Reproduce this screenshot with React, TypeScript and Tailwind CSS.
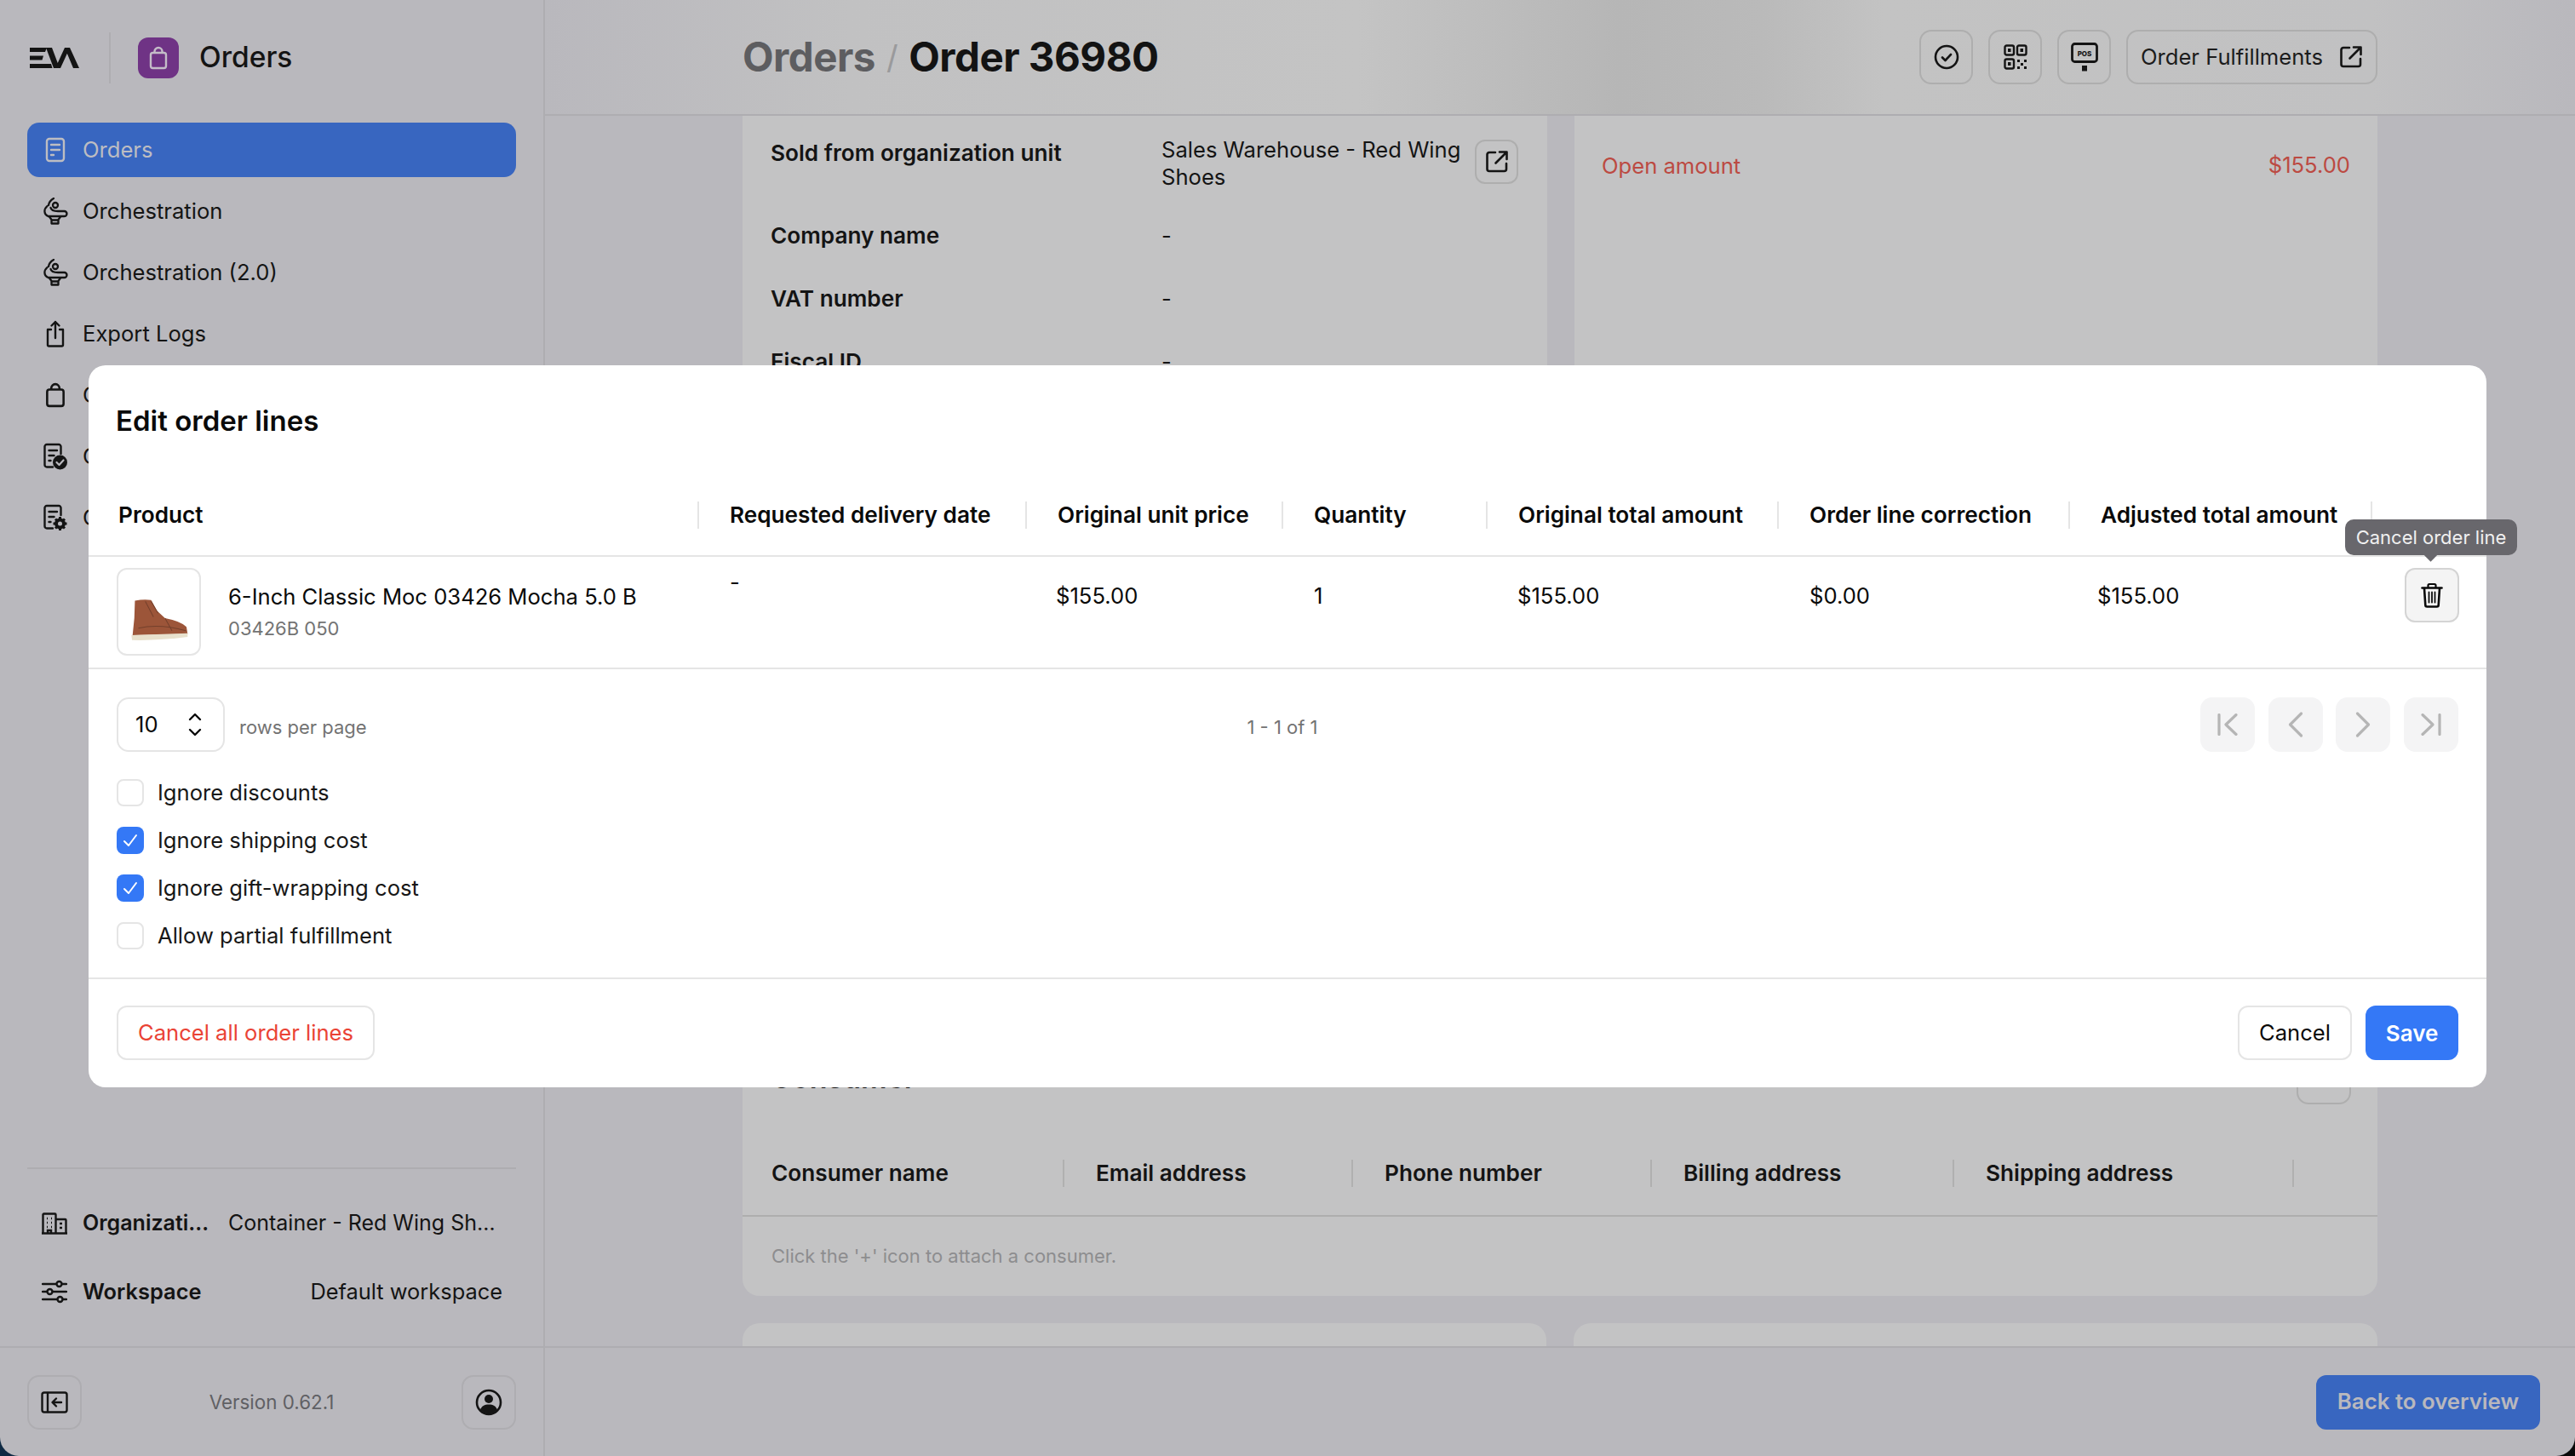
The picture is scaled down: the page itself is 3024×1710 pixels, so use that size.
import React from 'react';
import { ChevronLeft, ChevronRight } from 'lucide-react';

const Bag = ({ className }: { className?: string }) => (
  <svg viewBox="0 0 24 28" fill="none" stroke="currentColor" strokeWidth="2.4" strokeLinejoin="round" className={className}>
    <rect x="3" y="8" width="18" height="18" rx="2.5" />
    <path d="M7.5 8V6.5a4.5 4.5 0 0 1 9 0V8" />
  </svg>
);

const DocLines = ({ className }: { className?: string }) => (
  <svg viewBox="0 0 24 30" fill="none" stroke="currentColor" strokeWidth="2.4" strokeLinecap="round" strokeLinejoin="round" className={className}>
    <rect x="2" y="2" width="20" height="26" rx="3" />
    <path d="M7 9h10M7 15h10M7 21h3" />
  </svg>
);

const Orchestration = ({ className }: { className?: string }) => (
  <svg viewBox="0 0 32 32" fill="none" stroke="currentColor" strokeWidth="2.3" strokeLinecap="round" strokeLinejoin="round" className={className}>
    <path d="M14 1C10.500 3 8.500 5.500 8 9" />
    <circle cx="16" cy="9" r="3" />
    <path d="M6.500 10C2 14 2.500 20 7.500 22H26.500a3 3 0 0 0 0-6H19C14.500 16 11 14.500 10.500 12" />
    <path d="M9 22.500l2.500 3.500v4.500h8V26l2.500-3.500M11.500 26.500h8" />
  </svg>
);

const ExportIcon = ({ className }: { className?: string }) => (
  <svg viewBox="0 0 24 32" fill="none" stroke="currentColor" strokeWidth="2.4" strokeLinecap="round" strokeLinejoin="round" className={className}>
    <path d="M7 11H3v18a1.500 1.500 0 0 0 1.500 1.500h15A1.500 1.500 0 0 0 21 29V11h-4" />
    <path d="M12 21V2M7.500 6.500 12 2l4.500 4.500" />
  </svg>
);

const DocCheck = ({ gear, className }: { gear?: boolean; className?: string }) => (
  <svg viewBox="0 0 30 32" fill="none" className={className}>
    <path d="M12 28.500H5a2.500 2.500 0 0 1-2.500-2.500V4.500A2.500 2.500 0 0 1 5 2h14a2.500 2.500 0 0 1 2.500 2.500V13" stroke="currentColor" strokeWidth="2.4" strokeLinecap="round" />
    <path d="M7.500 9h9.500M7.500 15h6M7.500 21h2" stroke="currentColor" strokeWidth="2.4" strokeLinecap="round" />
    {gear ? (
      <g>
        <circle cx="20.500" cy="23" r="4.500" fill="none" stroke="currentColor" strokeWidth="4" />
        <path d="M20.500 15v3M20.500 28v3M12.500 23h3M25.500 23h3M15 17.500l2 2M24 26.500l2 2M15 28.500l2-2M24 19.500l2-2" stroke="currentColor" strokeWidth="3" />
      </g>
    ) : (
      <g>
        <circle cx="20.500" cy="23" r="8.500" fill="currentColor" />
        <path d="M16.500 23l3 3 5-5.500" stroke="#b9b8bd" strokeWidth="2.200" strokeLinecap="round" strokeLinejoin="round" />
      </g>
    )}
  </svg>
);

const ExternalIcon = ({ className }: { className?: string }) => (
  <svg viewBox="0 0 26 26" fill="none" stroke="currentColor" strokeWidth="2.600" strokeLinecap="round" strokeLinejoin="round" className={className}>
    <path d="M11 2H4a2.500 2.500 0 0 0-2.500 2.500v17A2.500 2.500 0 0 0 4 24h17.500a2.500 2.500 0 0 0 2.500-2.500V15" />
    <path d="M16 1.500h8.500V10M24 2 11.500 14.500" />
  </svg>
);

const TrashIcon = ({ className }: { className?: string }) => (
  <svg viewBox="0 0 26 30" fill="none" stroke="currentColor" strokeLinecap="round" strokeLinejoin="round" className={className}>
    <path d="M1.500 6.500h23" strokeWidth="2.600" />
    <path d="M8.500 6V3.500A1.500 1.500 0 0 1 10 2h6a1.500 1.500 0 0 1 1.500 1.500V6" strokeWidth="2.200" />
    <path d="M4 7l1.300 19.500A2 2 0 0 0 7.300 28.500h11.400a2 2 0 0 0 2-2L22 7" strokeWidth="2.600" />
    <path d="M9.500 11.500v12M13 11.500v12M16.500 11.500v12" strokeWidth="1.800" />
  </svg>
);

const EdgeChevron = ({ flip }: { flip?: boolean }) => (
  <svg viewBox="0 0 24 26" fill="none" stroke="#b5b5b5" strokeWidth="3.200" strokeLinecap="round" strokeLinejoin="round" className={`w-[24px] h-[26px] ${flip ? 'rotate-180' : ''}`}>
    <path d="M2 1.500v23M22 1.500 10 13l12 11.500" />
  </svg>
);

const Checkbox = ({ checked, label }: { checked?: boolean; label: string }) => (
  <div className="flex items-center gap-[16px] h-[32px]">
    {checked ? (
      <span className="w-[32px] h-[32px] rounded-[8px] bg-[#3478f6] flex items-center justify-center">
        <svg viewBox="0 0 18 18" fill="none" stroke="#fff" strokeWidth="2" strokeLinecap="round" strokeLinejoin="round" className="w-[18px] h-[18px]">
          <path d="M2 10l5 5 9-12" />
        </svg>
      </span>
    ) : (
      <span className="w-[32px] h-[32px] rounded-[8px] border-2 border-[#e5e5e5] bg-white" />
    )}
    <span className="text-[25.6px] pt-[1px] text-[#171717]">{label}</span>
  </div>
);

const navItems = [
  { label: 'Orders', icon: <DocLines className="w-[24px] h-[30px]" />, active: true },
  { label: 'Orchestration', icon: <Orchestration className="w-[32px] h-[32px]" /> },
  { label: 'Orchestration (2.0)', icon: <Orchestration className="w-[32px] h-[32px]" /> },
  { label: 'Export Logs', icon: <ExportIcon className="w-[24px] h-[32px]" /> },
  { label: 'Orders', icon: <Bag className="w-[26px] h-[30px]" /> },
  { label: 'Orders', icon: <DocCheck className="w-[30px] h-[32px]" /> },
  { label: 'Orders', icon: <DocCheck gear className="w-[30px] h-[32px]" /> },
];

const columns = ['Product', 'Requested delivery date', 'Original unit price', 'Quantity', 'Original total amount', 'Order line correction', 'Adjusted total amount'];
const consumerColumns = ['Consumer name', 'Email address', 'Phone number', 'Billing address', 'Shipping address'];

const Sidebar = () => (
  <aside className="w-[640px] shrink-0 border-r-2 border-[#aeadb1] flex flex-col text-[#141414]">
    <div className="h-[135px] shrink-0 flex items-center pl-[35px]">
      <svg viewBox="0 0 58 24" className="w-[58px] h-[24px] text-[#141414]" fill="currentColor">
        <path d="M0 0h20l-2 5H0zM0 9.500h16l-1.500 5H0zM0 19h25l1.500 5H0z" />
        <path d="M19 0h7l9 24h-7zM30 24 41 0h6L36 24zM41 0h6l11 24h-7z" />
      </svg>
      <div className="w-[2px] h-[60px] bg-[#aeadb1] ml-[35px]" />
      <div className="ml-[32px] w-[48px] h-[48px] rounded-[12px] bg-[#6f3385] flex items-center justify-center text-[#c4bcc8]">
        <Bag className="w-[24px] h-[28px]" />
      </div>
      <span className="ml-[24px] text-[33.5px] font-medium">Orders</span>
    </div>

    <nav className="flex flex-col gap-[8px] px-[32px] pt-[9px]">
      {navItems.map((item, i) => (
        <div
          key={i}
          className={`h-[64px] rounded-[14px] flex items-center ${item.active ? 'bg-[#3866c0] text-[#bdbdc2]' : ''}`}
        >
          <span className="w-[65px] flex items-center justify-center">{item.icon}</span>
          <span className="text-[25.6px] pt-[1px]">{item.label}</span>
        </div>
      ))}
    </nav>

    <div className="flex-1" />

    <div className="mx-[32px] border-t-2 border-[#aeadb1] h-[210px] shrink-0 flex flex-col">
      <div className="flex items-center h-[64px] mt-[32px] pl-[17px] pr-[20px]">
        <svg viewBox="0 0 30 26" fill="none" stroke="currentColor" strokeWidth="2.400" className="w-[30px] h-[26px] shrink-0">
          <path d="M1.500 24.500V2.500a1 1 0 0 1 1-1h13a1 1 0 0 1 1 1v22M16.500 8h11a1 1 0 0 1 1 1v15.500M0 24.500h30" />
          <path d="M6 7h1M11 7h1M6 12h1M11 12h1M6 17h1M11 17h1M21 13h3M21 18h3M7 24v-3h4v3" />
        </svg>
        <span className="ml-[18px] w-[154px] truncate text-[25px] font-semibold">Organization</span>
        <span className="ml-[17px] flex-1 truncate text-[25px]">Container - Red Wing Shoes</span>
      </div>
      <div className="flex items-center justify-between h-[64px] mt-[16px] pl-[17px] pr-[16px]">
        <div className="flex items-center">
          <svg viewBox="0 0 30 28" fill="none" stroke="currentColor" strokeWidth="2.400" strokeLinecap="round" className="w-[30px] h-[28px]">
            <path d="M1 5h16M24 5h5M1 14h5M13 14h16M1 23h17M25 23h4" />
            <circle cx="20.500" cy="5" r="3" />
            <circle cx="9.500" cy="14" r="3" />
            <circle cx="21.500" cy="23" r="3" />
          </svg>
          <span className="ml-[18px] text-[25.4px] font-semibold">Workspace</span>
        </div>
        <span className="text-[25.4px]">Default workspace</span>
      </div>
    </div>

    <div className="h-[129px] shrink-0 border-t-2 border-[#aeadb1] flex items-center justify-between px-[32px]">
      <button className="w-[64px] h-[64px] rounded-[14px] border-2 border-[#aeadb1] flex items-center justify-center">
        <svg viewBox="0 0 32 26" fill="none" stroke="currentColor" strokeWidth="2.400" strokeLinecap="round" strokeLinejoin="round" className="w-[32px] h-[26px]">
          <rect x="1.500" y="1.500" width="29" height="23" rx="2.500" />
          <path d="M8 2v22M24 13H14M18 8.500 13.500 13l4.500 4.500" />
        </svg>
      </button>
      <span className="text-[22.4px] text-[#606064]">Version 0.62.1</span>
      <button className="w-[64px] h-[64px] rounded-[14px] border-2 border-[#aeadb1] flex items-center justify-center">
        <svg viewBox="0 0 32 32" className="w-[32px] h-[32px]" fill="none">
          <circle cx="16" cy="16" r="14" stroke="currentColor" strokeWidth="2.600" />
          <circle cx="16" cy="12" r="5" fill="currentColor" />
          <path d="M6 25c1.500-5 5-6.500 10-6.500s8.500 1.500 10 6.500a14 14 0 0 1-20 0z" fill="currentColor" />
        </svg>
      </button>
    </div>
  </aside>
);

const OrderInfoRow = ({ label, value }: { label: string; value: string }) => (
  <div className="flex items-center h-[74px] text-[26.2px]">
    <span className="w-[459px] font-semibold text-[#141414]">{label}</span>
    <span className="text-[25.6px] text-[#141414]">{value}</span>
  </div>
);

const Main = () => (
  <main className="flex-1 min-w-0 flex flex-col">
    <header className="h-[136px] shrink-0 border-b-2 border-[#aeadb1] pl-[232px] pr-[232px] flex items-center justify-between bg-[linear-gradient(90deg,#b9b8bd_0%,#c1c1c2_15%,#c4c4c4_40%,#b6b6b6_53%,#bababa_60%,#c3c3c3_66%,#c1c1c2_90%,#b9b8bd_100%)]">
      <h1 className="flex items-center text-[47.5px] font-bold tracking-[-0.5px] text-[#131313]">
        <span className="text-[#5d5d60]">Orders</span>
        <span className="mx-[13px] text-[38px] font-normal text-[#9a9a9c]">/</span>
        <span>Order 36980</span>
      </h1>
      <div className="flex items-center gap-[18px] text-[#141414]">
        <button className="w-[63px] h-[64px] rounded-[14px] border-2 border-[#aeaeae] flex items-center justify-center">
          <svg viewBox="0 0 30 30" fill="none" stroke="currentColor" strokeWidth="2.600" strokeLinecap="round" strokeLinejoin="round" className="w-[30px] h-[30px]">
            <circle cx="15" cy="15" r="13" />
            <path d="M10 15.500l3.500 3.500 6.500-7" />
          </svg>
        </button>
        <button className="w-[63px] h-[64px] rounded-[14px] border-2 border-[#aeaeae] flex items-center justify-center">
          <svg viewBox="0 0 28 30" fill="none" className="w-[28px] h-[30px]">
            <g stroke="currentColor" strokeWidth="2.400">
              <rect x="1.500" y="1.500" width="10.500" height="11" rx="2" />
              <rect x="16" y="1.500" width="10.500" height="11" rx="2" />
              <rect x="1.500" y="17.500" width="10.500" height="11" rx="2" />
            </g>
            <g fill="currentColor">
              <rect x="5" y="5" width="3.500" height="4" />
              <rect x="19.500" y="5" width="3.500" height="4" />
              <rect x="5" y="21" width="3.500" height="4" />
              <rect x="16" y="18" width="3" height="3" />
              <rect x="24" y="18" width="3" height="3" />
              <rect x="20" y="22" width="3" height="3" />
              <rect x="16" y="26" width="3" height="3" />
              <rect x="24" y="26" width="3" height="3" />
            </g>
          </svg>
        </button>
        <button className="w-[63px] h-[64px] rounded-[14px] border-2 border-[#aeaeae] flex items-center justify-center">
          <svg viewBox="0 0 32 34" fill="none" className="w-[32px] h-[34px]">
            <rect x="1.500" y="1.500" width="29" height="21" rx="3" stroke="currentColor" strokeWidth="2.800" />
            <rect x="13" y="27" width="6" height="6.500" fill="currentColor" />
            <text x="16" y="15.500" textAnchor="middle" fontSize="8" fontWeight="800" fill="currentColor" fontFamily="Inter, sans-serif">POS</text>
          </svg>
        </button>
        <button className="w-[295px] h-[64px] rounded-[14px] border-2 border-[#aeaeae] flex items-center justify-between pl-[15px] pr-[16px]">
          <span className="text-[25.6px] text-[#1c1c1c]">Order Fulfillments</span>
          <ExternalIcon className="w-[26px] h-[26px]" />
        </button>
      </div>
    </header>

    <div className="flex-1 min-h-0 overflow-hidden pl-[232px] pr-[232px] flex flex-col gap-[32px]">
      <div className="shrink-0 h-[1010px] flex gap-[32px]">
        <section className="flex-1 bg-[#c3c3c4] rounded-b-[20px] px-[33px] pt-[20px]">
          <div className="flex items-center h-[72px]">
            <span className="w-[459px] -mt-[24px] text-[26.2px] font-semibold text-[#141414]">Sold from organization unit</span>
            <span className="w-[368px] text-[25.6px] text-[#141414] leading-[32px]">Sales Warehouse - Red Wing Shoes</span>
            <button className="w-[51px] h-[52px] -mt-[4px] rounded-[12px] border-2 border-[#aeaeae] flex items-center justify-center text-[#141414]">
              <ExternalIcon className="w-[26px] h-[26px]" />
            </button>
          </div>
          <div className="mt-[12px]">
            <OrderInfoRow label="Company name" value="-" />
            <OrderInfoRow label="VAT number" value="-" />
            <OrderInfoRow label="Fiscal ID" value="-" />
          </div>
        </section>
        <section className="flex-1 bg-[#c3c3c4] rounded-b-[20px] px-[32px] pt-[40px]">
          <div className="flex justify-between items-center text-[25.6px] text-[#bc4a42]">
            <span>Open amount</span>
            <span className="-mt-[2px]">$155.00</span>
          </div>
        </section>
      </div>

      <section className="shrink-0 h-[344px] bg-[#c3c3c4] rounded-[20px] pt-[55px]">
        <div className="flex items-center justify-between h-[64px] pl-[33px] pr-[31px]">
          <h2 className="text-[34px] font-semibold text-[#141414]">Consumer</h2>
          <button className="w-[64px] h-[64px] rounded-[14px] border-2 border-[#aeaeae] text-[28px] text-[#141414]">+</button>
        </div>
        <div className="grid grid-cols-[378px_339px_351px_355px_399px] items-center h-[100px] mt-[32px] border-b-2 border-[#aeaeae]">
          {consumerColumns.map((c, i) => (
            <div key={c} className={`h-[32px] flex items-center border-r-2 border-[#b0b0b0] text-[26.2px] font-semibold text-[#141414] ${i === 0 ? 'pl-[34px]' : 'pl-[37px]'}`}>
              {c}
            </div>
          ))}
        </div>
        <p className="h-[92px] flex items-center pl-[34px] text-[22px] text-[#8d8d8f]">Click the '+' icon to attach a consumer.</p>
      </section>

      <div className="shrink-0 h-[200px] flex gap-[32px]">
        <section className="flex-1 bg-[#c3c3c4] rounded-t-[20px]" />
        <section className="flex-1 bg-[#c3c3c4] rounded-t-[20px]" />
      </div>
    </div>

    <footer className="h-[129px] shrink-0 border-t-2 border-[#aeadb1] flex items-center justify-end pr-[41px]">
      <button className="w-[263px] h-[64px] rounded-[12px] bg-[#3866c0] text-[25.8px] font-semibold text-[#b9b8bd]">Back to overview</button>
    </footer>
  </main>
);

const Modal = () => (
  <div className="absolute left-[104px] top-[429px] w-[2816px] h-[848px] bg-white rounded-[20px] flex flex-col text-[#0a0a0a]">
    <div className="h-[127px] shrink-0 pl-[32px] pt-[44px]">
      <h2 className="text-[33px] leading-[42px] font-semibold">Edit order lines</h2>
    </div>

    <div className="grid grid-cols-[717px_385px_301px_240px_342px_342px_355px_134px] items-center h-[98px] pt-[2px] shrink-0 border-b-2 border-[#e5e5e5]">
      {columns.map((c, i) => (
        <div key={c} className={`h-[32px] flex items-center border-r-2 border-[#e5e5e5] text-[26.2px] font-semibold ${i === 0 ? 'pl-[35px]' : 'pl-[36px]'}`}>
          {c}
        </div>
      ))}
    </div>

    <div className="grid grid-cols-[717px_385px_301px_240px_342px_342px_355px_134px] h-[132px] shrink-0 border-b-2 border-[#e5e5e5] text-[25.6px]">
      <div className="flex pl-[33px] pt-[13px]">
        <div className="w-[99px] h-[103px] rounded-[12px] border-2 border-[#e5e5e5] flex items-center justify-center">
          <svg viewBox="0 0 100 68" preserveAspectRatio="none" className="w-[68px] h-[50px] mt-[20px] blur-[0.6px]">
            <path d="M8 2Q24 -1 36 1L46 18L60 30Q88 35 97 44L99 55L4 57Q8 30 8 2z" fill="#9c5539" />
            <path d="M36 3L48 22M26 3L40 28M60 30L72 50M14 46Q50 38 96 50" stroke="#74402c" strokeWidth="1.500" fill="none" />
            <path d="M2 57L99 54L99 60Q50 66 3 65z" fill="#e8e1cd" />
          </svg>
        </div>
        <div className="ml-[32px] pt-[16px]">
          <div className="leading-[36px]">6-Inch Classic Moc 03426 Mocha 5.0 B</div>
          <div className="mt-[3px] text-[22px] leading-[32px] text-[#737373]">03426B 050</div>
        </div>
      </div>
      <div className="pl-[36px] pt-[12px] leading-[36px]">-</div>
      <div className="pl-[34px] pt-[28px] leading-[36px]">$155.00</div>
      <div className="pl-[36px] pt-[28px] leading-[36px]">1</div>
      <div className="pl-[35px] pt-[28px] leading-[36px]">$155.00</div>
      <div className="pl-[36px] pt-[28px] leading-[36px]">$0.00</div>
      <div className="pl-[32px] pt-[28px] leading-[36px]">$155.00</div>
      <div className="relative pl-[38px] pt-[13px]">
        <button className="w-[64px] h-[64px] rounded-[12px] border-2 border-[#d4d4d4] bg-[#f4f4f4] flex items-center justify-center">
          <TrashIcon className="w-[26px] h-[30px]" />
        </button>
        <div className="absolute left-[-32px] top-[-44px] w-[202px] h-[42px] rounded-[10px] bg-[#68676c] text-[#f0f0f0] text-[22px] flex items-center justify-center">
          Cancel order line
          <span className="absolute left-[94px] bottom-[-5px] w-[13px] h-[13px] rotate-45 bg-[#68676c]" />
        </div>
      </div>
    </div>

    <div className="flex-1 px-[33px] pt-[33px]">
      <div className="relative flex items-center justify-between h-[64px]">
        <div className="flex items-center">
          <div className="w-[127px] h-[64px] rounded-[14px] border-2 border-[#e5e5e5] flex items-center justify-between pl-[20px] pr-[25px]">
            <span className="text-[25.6px]">10</span>
            <svg viewBox="0 0 16 28" fill="none" stroke="#0a0a0a" strokeWidth="2.400" strokeLinecap="round" strokeLinejoin="round" className="w-[16px] h-[28px]">
              <path d="M2 8l6-6 6 6M2 20l6 6 6-6" />
            </svg>
          </div>
          <span className="ml-[17px] mt-[6px] text-[22px] text-[#737373]">rows per page</span>
        </div>
        <span className="absolute left-[1369px] w-[0px] whitespace-nowrap mt-[6px] text-[22px] text-[#737373] flex justify-center">1 - 1 of 1</span>
        <div className="flex items-center gap-[15.6px]">
          <button className="w-[64px] h-[64px] rounded-[14px] bg-[#f4f4f5] flex items-center justify-center"><EdgeChevron /></button>
          <button className="w-[64px] h-[64px] rounded-[14px] bg-[#f4f4f5] flex items-center justify-center"><ChevronLeft size={52} color="#b5b5b5" strokeWidth={1.500} /></button>
          <button className="w-[64px] h-[64px] rounded-[14px] bg-[#f4f4f5] flex items-center justify-center"><ChevronRight size={52} color="#b5b5b5" strokeWidth={1.500} /></button>
          <button className="w-[64px] h-[64px] rounded-[14px] bg-[#f4f4f5] flex items-center justify-center"><EdgeChevron flip /></button>
        </div>
      </div>
      <div className="flex flex-col gap-[24px] mt-[32px]">
        <Checkbox label="Ignore discounts" />
        <Checkbox checked label="Ignore shipping cost" />
        <Checkbox checked label="Ignore gift-wrapping cost" />
        <Checkbox label="Allow partial fulfillment" />
      </div>
    </div>

    <div className="h-[129px] shrink-0 border-t-2 border-[#e5e5e5] flex items-start justify-between px-[33px] pt-[31px]">
      <button className="w-[303px] h-[64px] rounded-[12px] border-2 border-[#e5e5e5] text-[25.6px] text-[#ea4335]">Cancel all order lines</button>
      <div className="flex gap-[16px]">
        <button className="w-[134px] h-[64px] rounded-[12px] border-2 border-[#e5e5e5] text-[25.6px]">Cancel</button>
        <button className="w-[109px] h-[64px] rounded-[12px] bg-[#3478f6] text-[26px] font-semibold text-white">Save</button>
      </div>
    </div>
  </div>
);

export default function App() {
  return (
    <div className="w-[3024px] h-[1710px] bg-[linear-gradient(90deg,#0f2a44,#0a0a0a)] font-['Inter',sans-serif] overflow-hidden">
      <div className="relative w-[3024px] h-[1710px] bg-[#b9b8bd] rounded-b-[22px] overflow-hidden flex">
        <Sidebar />
        <Main />
        <Modal />
      </div>
    </div>
  );
}
